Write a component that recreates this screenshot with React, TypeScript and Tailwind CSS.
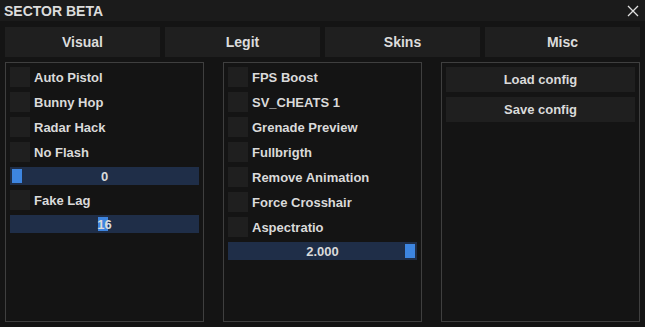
import React from "react";

const font = { fontFamily: '"Liberation Sans", Arial, sans-serif' };

function Check({ label }: { label: string }) {
  return (
    <div className="flex items-center h-[20px] gap-[4px]">
      <div className="w-[20px] h-[20px] bg-[#1f1f1f] shrink-0" />
      <span className="text-[13px] font-bold text-[#dadada] leading-none">{label}</span>
    </div>
  );
}

function Slider({ value, grab }: { value: string; grab: number }) {
  return (
    <div className="relative h-[18px] w-full bg-[#1f2e48] flex items-center justify-center">
      <div
        className="absolute top-[2px] w-[10px] h-[14px] bg-[#3d85e0]"
        style={{ left: grab }}
      />
      <span className="relative text-[13px] font-bold text-[#dadada] leading-none">{value}</span>
    </div>
  );
}

function Panel({ children }: { children?: React.ReactNode }) {
  return (
    <div className="w-[200px] h-[260px] border border-[#3f3f3f] p-[4px] flex flex-col gap-[5px]">
      {children}
    </div>
  );
}

export default function App() {
  return (
    <div className="w-[645px] h-[327px] bg-[#141414] flex flex-col" style={font}>
      <div className="h-[21px] bg-[#1b1b1b] flex items-center justify-between pl-[4px] pr-[6px]">
        <span className="text-[14px] font-bold text-[#dcdcdc] leading-none">SECTOR BETA</span>
        <svg width="12" height="12" viewBox="0 0 12 12">
          <path d="M1 1 L11 11 M11 1 L1 11" stroke="#e0e0e0" strokeWidth="1.3" />
        </svg>
      </div>
      <div className="flex gap-[5px] px-[5px] pt-[6px]">
        {["Visual", "Legit", "Skins", "Misc"].map((t) => (
          <div
            key={t}
            className="w-[155px] h-[30px] bg-[#1f1f1f] flex items-center justify-center text-[14px] font-bold text-[#dcdcdc]"
          >
            {t}
          </div>
        ))}
      </div>
      <div className="flex gap-[19px] px-[5px] pt-[5px]">
        <Panel>
          <Check label="Auto Pistol" />
          <Check label="Bunny Hop" />
          <Check label="Radar Hack" />
          <Check label="No Flash" />
          <Slider value="0" grab={2} />
          <Check label="Fake Lag" />
          <Slider value="16" grab={88} />
        </Panel>
        <Panel>
          <Check label="FPS Boost" />
          <Check label="SV_CHEATS 1" />
          <Check label="Grenade Preview" />
          <Check label="Fullbrigth" />
          <Check label="Remove Animation" />
          <Check label="Force Crosshair" />
          <Check label="Aspectratio" />
          <Slider value="2.000" grab={177} />
        </Panel>
        <Panel>
          <div className="h-[25px] bg-[#1f1f1f] flex items-center justify-center text-[13px] font-bold text-[#dadada]">
            Load config
          </div>
          <div className="h-[25px] bg-[#1f1f1f] flex items-center justify-center text-[13px] font-bold text-[#dadada]">
            Save config
          </div>
        </Panel>
      </div>
    </div>
  );
}
